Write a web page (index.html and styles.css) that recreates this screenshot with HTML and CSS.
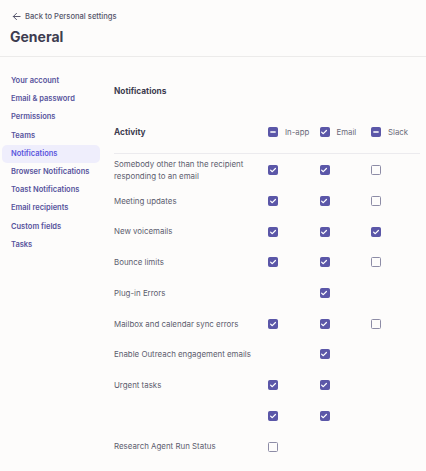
FILE: index.html
```html
<!DOCTYPE html>
<html>
<head>
<meta charset="utf-8">
<link rel="stylesheet" href="styles.css">
</head>
<body>
<header class="top">
  <a class="back"><svg class="arrow" viewBox="0 0 10 10" width="9" height="9"><path d="M9 5H1.5M5 1.5L1.5 5L5 8.5" fill="none" stroke="#55556a" stroke-width="1.1" stroke-linecap="round" stroke-linejoin="round"/></svg><span>Back to Personal settings</span></a>
  <h1 class="title">General</h1>
</header>
<div class="layout">
  <nav class="side">
    <a class="nav-item">Your account</a>
    <a class="nav-item">Email &amp; password</a>
    <a class="nav-item">Permissions</a>
    <a class="nav-item">Teams</a>
    <a class="nav-item active">Notifications</a>
    <a class="nav-item">Browser Notifications</a>
    <a class="nav-item">Toast Notifications</a>
    <a class="nav-item">Email recipients</a>
    <a class="nav-item">Custom fields</a>
    <a class="nav-item">Tasks</a>
  </nav>
  <main class="main">
    <h2 class="section">Notifications</h2>
    <div class="table">
      <div class="row head">
        <div class="label strong">Activity</div>
        <div class="cell"><span class="cb on"><svg viewBox="0 0 10 10"><path d="M2.8 5H7.2" stroke="#fff" stroke-width="1.3" stroke-linecap="round"/></svg></span><span class="col-name">In-app</span></div>
        <div class="cell"><span class="cb on"><svg viewBox="0 0 10 10"><path d="M2.6 5.1L4.3 6.7L7.4 3.5" fill="none" stroke="#fff" stroke-width="1.2" stroke-linecap="round" stroke-linejoin="round"/></svg></span><span class="col-name">Email</span></div>
        <div class="cell"><span class="cb on"><svg viewBox="0 0 10 10"><path d="M2.8 5H7.2" stroke="#fff" stroke-width="1.3" stroke-linecap="round"/></svg></span><span class="col-name">Slack</span></div>
      </div>
      <div class="row">
        <div class="label">Somebody other than the recipient<br>responding to an email</div>
        <div class="cell"><span class="cb on"><svg viewBox="0 0 10 10"><path d="M2.6 5.1L4.3 6.7L7.4 3.5" fill="none" stroke="#fff" stroke-width="1.2" stroke-linecap="round" stroke-linejoin="round"/></svg></span></div>
        <div class="cell"><span class="cb on"><svg viewBox="0 0 10 10"><path d="M2.6 5.1L4.3 6.7L7.4 3.5" fill="none" stroke="#fff" stroke-width="1.2" stroke-linecap="round" stroke-linejoin="round"/></svg></span></div>
        <div class="cell"><span class="cb"></span></div>
      </div>
      <div class="row">
        <div class="label">Meeting updates</div>
        <div class="cell"><span class="cb on"><svg viewBox="0 0 10 10"><path d="M2.6 5.1L4.3 6.7L7.4 3.5" fill="none" stroke="#fff" stroke-width="1.2" stroke-linecap="round" stroke-linejoin="round"/></svg></span></div>
        <div class="cell"><span class="cb on"><svg viewBox="0 0 10 10"><path d="M2.6 5.1L4.3 6.7L7.4 3.5" fill="none" stroke="#fff" stroke-width="1.2" stroke-linecap="round" stroke-linejoin="round"/></svg></span></div>
        <div class="cell"><span class="cb"></span></div>
      </div>
      <div class="row">
        <div class="label">New voicemails</div>
        <div class="cell"><span class="cb on"><svg viewBox="0 0 10 10"><path d="M2.6 5.1L4.3 6.7L7.4 3.5" fill="none" stroke="#fff" stroke-width="1.2" stroke-linecap="round" stroke-linejoin="round"/></svg></span></div>
        <div class="cell"><span class="cb on"><svg viewBox="0 0 10 10"><path d="M2.6 5.1L4.3 6.7L7.4 3.5" fill="none" stroke="#fff" stroke-width="1.2" stroke-linecap="round" stroke-linejoin="round"/></svg></span></div>
        <div class="cell"><span class="cb on"><svg viewBox="0 0 10 10"><path d="M2.6 5.1L4.3 6.7L7.4 3.5" fill="none" stroke="#fff" stroke-width="1.2" stroke-linecap="round" stroke-linejoin="round"/></svg></span></div>
      </div>
      <div class="row">
        <div class="label">Bounce limits</div>
        <div class="cell"><span class="cb on"><svg viewBox="0 0 10 10"><path d="M2.6 5.1L4.3 6.7L7.4 3.5" fill="none" stroke="#fff" stroke-width="1.2" stroke-linecap="round" stroke-linejoin="round"/></svg></span></div>
        <div class="cell"><span class="cb on"><svg viewBox="0 0 10 10"><path d="M2.6 5.1L4.3 6.7L7.4 3.5" fill="none" stroke="#fff" stroke-width="1.2" stroke-linecap="round" stroke-linejoin="round"/></svg></span></div>
        <div class="cell"><span class="cb"></span></div>
      </div>
      <div class="row">
        <div class="label">Plug-in Errors</div>
        <div class="cell"></div>
        <div class="cell"><span class="cb on"><svg viewBox="0 0 10 10"><path d="M2.6 5.1L4.3 6.7L7.4 3.5" fill="none" stroke="#fff" stroke-width="1.2" stroke-linecap="round" stroke-linejoin="round"/></svg></span></div>
        <div class="cell"></div>
      </div>
      <div class="row">
        <div class="label">Mailbox and calendar sync errors</div>
        <div class="cell"><span class="cb on"><svg viewBox="0 0 10 10"><path d="M2.6 5.1L4.3 6.7L7.4 3.5" fill="none" stroke="#fff" stroke-width="1.2" stroke-linecap="round" stroke-linejoin="round"/></svg></span></div>
        <div class="cell"><span class="cb on"><svg viewBox="0 0 10 10"><path d="M2.6 5.1L4.3 6.7L7.4 3.5" fill="none" stroke="#fff" stroke-width="1.2" stroke-linecap="round" stroke-linejoin="round"/></svg></span></div>
        <div class="cell"><span class="cb"></span></div>
      </div>
      <div class="row">
        <div class="label">Enable Outreach engagement emails</div>
        <div class="cell"></div>
        <div class="cell"><span class="cb on"><svg viewBox="0 0 10 10"><path d="M2.6 5.1L4.3 6.7L7.4 3.5" fill="none" stroke="#fff" stroke-width="1.2" stroke-linecap="round" stroke-linejoin="round"/></svg></span></div>
        <div class="cell"></div>
      </div>
      <div class="row">
        <div class="label">Urgent tasks</div>
        <div class="cell"><span class="cb on"><svg viewBox="0 0 10 10"><path d="M2.6 5.1L4.3 6.7L7.4 3.5" fill="none" stroke="#fff" stroke-width="1.2" stroke-linecap="round" stroke-linejoin="round"/></svg></span></div>
        <div class="cell"><span class="cb on"><svg viewBox="0 0 10 10"><path d="M2.6 5.1L4.3 6.7L7.4 3.5" fill="none" stroke="#fff" stroke-width="1.2" stroke-linecap="round" stroke-linejoin="round"/></svg></span></div>
        <div class="cell"></div>
      </div>
      <div class="row">
        <div class="label"></div>
        <div class="cell"><span class="cb on"><svg viewBox="0 0 10 10"><path d="M2.6 5.1L4.3 6.7L7.4 3.5" fill="none" stroke="#fff" stroke-width="1.2" stroke-linecap="round" stroke-linejoin="round"/></svg></span></div>
        <div class="cell"><span class="cb on"><svg viewBox="0 0 10 10"><path d="M2.6 5.1L4.3 6.7L7.4 3.5" fill="none" stroke="#fff" stroke-width="1.2" stroke-linecap="round" stroke-linejoin="round"/></svg></span></div>
        <div class="cell"></div>
      </div>
      <div class="row">
        <div class="label">Research Agent Run Status</div>
        <div class="cell"><span class="cb"></span></div>
        <div class="cell"></div>
        <div class="cell"></div>
      </div>
    </div>
  </main>
</div>
</body>
</html>
```
FILE: styles.css
```css
html, body {
  margin: 0;
  padding: 0;
  background: #fdfcfb;
  font-family: Inter, "Noto Sans", sans-serif;
  color: #5c5c6e;
}
.top {
  padding: 10px 10px 0 10px;
  height: 46px;
  border-bottom: 1px solid #ecebea;
}
.back {
  display: flex;
  align-items: center;
  gap: 4px;
  font-size: 7.6px;
  font-weight: 500;
  color: #55556a;
  height: 12px;
}
.arrow { display: block; margin-left: 2px; }
.title {
  margin: 7px 0 0 0;
  font-size: 14px;
  font-weight: 700;
  color: #3e3d50;
  line-height: 16px;
}
.layout {
  display: flex;
}
.side {
  width: 98px;
  padding: 15px 0 0 2px;
  display: flex;
  flex-direction: column;
  flex-shrink: 0;
}
.nav-item {
  display: block;
  height: 18.2px;
  line-height: 18.2px;
  padding-left: 9px;
  font-size: 7.5px;
  font-weight: 600;
  color: #56539c;
  border-radius: 5px;
  white-space: nowrap;
}
.nav-item.active {
  background: #efeefc;
  color: #5a55dc;
}
.main {
  flex: 1;
  padding: 0 6px 0 14px;
}
.section {
  margin: 28px 0 0 0;
  font-size: 8.3px;
  font-weight: 700;
  line-height: 12px;
  color: #3e3d50;
}
.table {
  margin-top: 29px;
}
.row {
  display: grid;
  grid-template-columns: 154px 51.5px 51.5px 1fr;
  align-items: center;
  height: 30.7px;
}
.row.head {
  height: 27px;
  align-items: start;
  border-bottom: 1px solid #ecebee;
  margin-bottom: 1px;
}
.label {
  font-size: 7.9px;
  line-height: 12.5px;
  color: #5c5c6e;
}
.label.strong {
  font-weight: 700;
  font-size: 8.3px;
  color: #3e3d50;
}
.cell {
  display: flex;
  align-items: center;
  gap: 7px;
  height: 10px;
}
.head .cell { margin-top: 1px; }
.col-name {
  font-size: 7.8px;
  color: #6a6a7a;
}
.cb {
  box-sizing: border-box;
  width: 10px;
  height: 10px;
  border: 1.2px solid #8d8ca6;
  border-radius: 1.5px;
  display: block;
  flex-shrink: 0;
}
.cb.on {
  background: #5b57a8;
  border-color: #5b57a8;
}
.cb svg {
  display: block;
  margin: -1.2px;
  width: 10px;
  height: 10px;
}
```
